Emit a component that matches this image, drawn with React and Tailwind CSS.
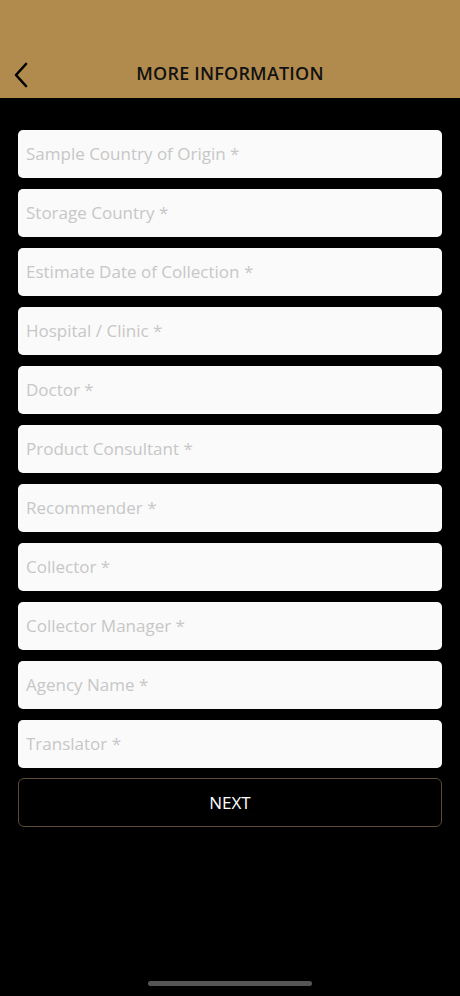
import { useState } from "react";

const fields = [
  "Sample Country of Origin *",
  "Storage Country *",
  "Estimate Date of Collection *",
  "Hospital / Clinic *",
  "Doctor *",
  "Product Consultant *",
  "Recommender *",
  "Collector *",
  "Collector Manager *",
  "Agency Name *",
  "Translator *",
];

export default function App() {
  const [values, setValues] = useState({});

  return (
    <div
      className="relative w-[460px] h-[996px] bg-black overflow-hidden"
      style={{ fontFamily: '"Open Sans", "Liberation Sans", sans-serif' }}
    >
      {/* Header */}
      <div className="h-[98px] bg-[#b08b4d] flex items-end">
        <div className="relative w-full h-[52px] flex items-center justify-center">
          <button className="absolute left-[12px] top-[16px] text-black">
            <svg width="20" height="26" viewBox="0 0 20 26" fill="none" stroke="currentColor" strokeWidth="2.6" strokeLinecap="round" strokeLinejoin="round">
              <path d="M14 2 L4 13 L14 24" />
            </svg>
          </button>
          <h1 className="text-[18px] font-semibold text-[#111] tracking-[0.2px] mt-[2px]">
            MORE INFORMATION
          </h1>
        </div>
      </div>

      {/* Form */}
      <div className="px-[18px] pt-[32px] flex flex-col gap-[11px]">
        {fields.map((f) => (
          <input
            key={f}
            type="text"
            placeholder={f}
            value={values[f] || ""}
            onChange={(e) => setValues({ ...values, [f]: e.target.value })}
            className="h-[48px] w-full rounded-[5px] bg-[#fafafa] px-[8px] pb-[2px] text-[17px] text-[#222] placeholder-[#c7c7c7] outline-none"
          />
        ))}
        <button className="mt-[-1px] h-[49px] w-full rounded-[6px] border border-[#5c4a32] bg-black text-white text-[17px]">
          NEXT
        </button>
      </div>

      {/* Home indicator */}
      <div className="absolute bottom-[10px] left-[148px] w-[164px] h-[5px] rounded-full bg-[#555]" />
    </div>
  );
}
